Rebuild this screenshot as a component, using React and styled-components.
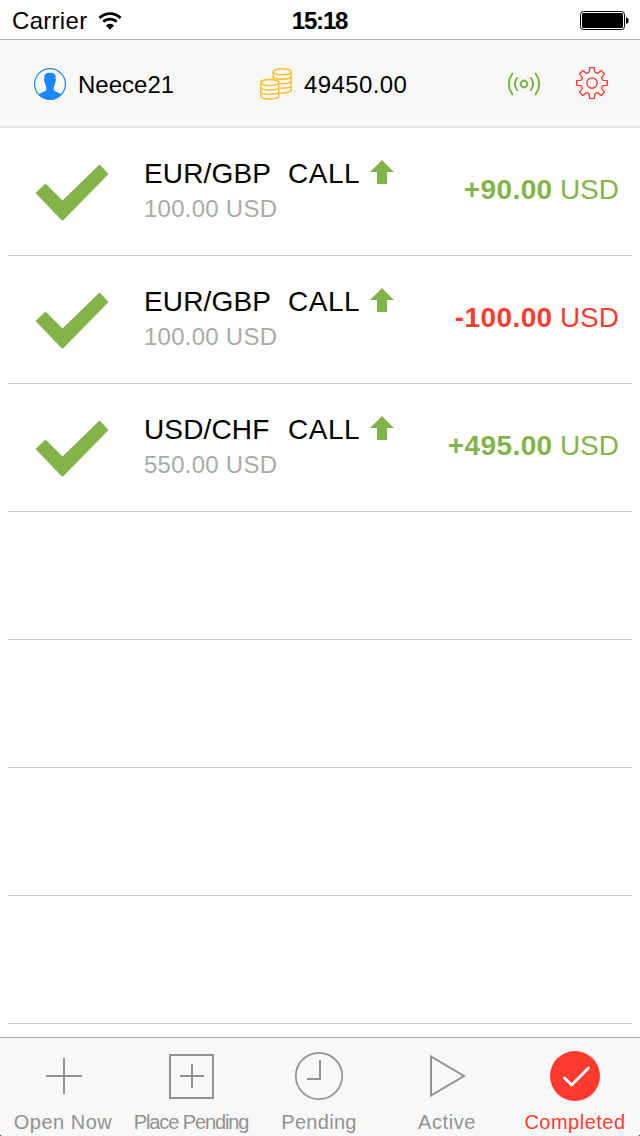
import React from 'react'
import styled, { createGlobalStyle } from 'styled-components'

const green = '#83b44a'
const red = '#ff3b30'
const grey = '#929292'

const trades = [
  { id: 1, pair: 'EUR/GBP', type: 'CALL', stake: '100.00 USD', result: '+90.00', currency: 'USD', color: green },
  { id: 2, pair: 'EUR/GBP', type: 'CALL', stake: '100.00 USD', result: '-100.00', currency: 'USD', color: red },
  { id: 3, pair: 'USD/CHF', type: 'CALL', stake: '550.00 USD', result: '+495.00', currency: 'USD', color: green },
]
const emptyRows = [4, 5, 6, 7]

const gearPoints = () => {
  const points = []
  const add = (radius, deg) => {
    const rad = (deg * Math.PI) / 180
    points.push(`${(16 + radius * Math.sin(rad)).toFixed(2)},${(16 - radius * Math.cos(rad)).toFixed(2)}`)
  }
  for (let i = 0; i < 8; i++) {
    const a = i * 45
    add(11, a - 17)
    add(12, a - 13)
    add(15.5, a - 9)
    add(15.5, a + 9)
    add(12, a + 13)
    add(11, a + 17)
  }
  return points.join(' ')
}

const WifiIcon = () => (
  <svg width='24' height='18' viewBox='0 0 26 20'>
    <path d='M1.3 6.6a16.6 16.6 0 0 1 23.4 0' fill='none' stroke='#000' strokeWidth='3.2' />
    <path d='M5.6 10.9a10.5 10.5 0 0 1 14.8 0' fill='none' stroke='#000' strokeWidth='3' />
    <path d='M13 19.6l-4.6-4.6a6.4 6.4 0 0 1 9.2 0z' />
  </svg>
)

const BatteryIcon = () => (
  <svg width='50' height='20' viewBox='0 0 50 20'>
    <rect x='0.5' y='0.5' width='44' height='18' rx='3' fill='none' stroke='#000' />
    <rect x='2' y='2' width='41' height='15' rx='1.5' />
    <path d='M46 6.2c3.6 0.6 3.6 6 0 6.6z' />
  </svg>
)

const UserIcon = () => (
  <svg width='32' height='32' viewBox='0 0 32 32'>
    <circle cx='16' cy='16' r='15.4' fill='none' stroke='#1c86fb' strokeWidth='1.2' />
    <path
      d='M16 4.8c4.2 0 6 1.6 5.6 5.6.6.3.4 3.2-.4 3.9-.3 2.2-.8 3.6-1.5 4.6v2.7c.4 2.400 5.2 2.7 7.8 5.100C24.6 30.2 20.5 31.7 16 31.7S7.4 30.2 4.5 26.7c2.600-2.400 7.400-2.700 7.800-5.100v-2.700c-.7-1-1.200-2.400-1.500-4.600-.8-.7-1-3.600-.4-3.900C10 6.400 11.800 4.800 16 4.800z'
      fill='#1c86fb'
    />
  </svg>
)

const CoinsIcon = () => (
  <svg width='32' height='32' viewBox='0 0 32 32' fill='none' stroke='#fdc02f' strokeWidth='1.5'>
    <ellipse cx='22.2' cy='3.8' rx='9' ry='3' />
    <path d='M13.2 3.8v8M31.2 3.8v18.200c0 1.800-4.500 3.300-11.700 2.900M31.200 8.300c0 3.900-18 3.900-18 0M31.200 12.800c0 2.200-5.500 3.200-11.900 2.600M31.200 17.400c0 2.200-5.500 3.200-11.700 2.700' />
    <ellipse cx='9.8' cy='14.6' rx='9' ry='3' />
    <path d='M.8 14.6v13.500c0 4 18 4 18 0V14.600M18.800 19.100c0 4-18 4-18 0M18.800 23.600c0 4-18 4-18 0' />
  </svg>
)

const SignalIcon = () => (
  <svg width='32' height='24' viewBox='0 0 32 24' fill='none' stroke={green} strokeWidth='2.1' strokeLinecap='round'>
    <circle cx='16' cy='12' r='3.3' strokeWidth='2.2' />
    <path d='M9 6a10.500 10.500 0 0 0 0 12M23 6a10.500 10.500 0 0 1 0 12M4.400 1.700a17 17 0 0 0 0 20.600M27.600 1.700a17 17 0 0 1 0 20.600' />
  </svg>
)

const GearIcon = () => (
  <svg width='32' height='32' viewBox='0 0 32 32' fill='none' stroke={red} strokeWidth='1.35'>
    <polygon points={gearPoints()} strokeLinejoin='round' />
    <circle cx='16' cy='16' r='5.2' />
  </svg>
)

const CheckIcon = () => (
  <svg width='72' height='56' viewBox='0 0 72 56'>
    <path d='M1.5 28L9.5 20.5L26.5 37.5L63.5 1.5L70.5 9L26.5 54Z' fill={green} stroke={green} strokeWidth='3' strokeLinejoin='round' />
  </svg>
)

const ArrowIcon = () => (
  <svg width='24' height='24' viewBox='0 0 24 24'>
    <path d='M12 0L24 12H17V24H7V12H0Z' fill={green} />
  </svg>
)

const tabs = [
  {
    label: 'Open Now',
    spacing: 0.5,
    icon: <path d='M25 7v36M7 25h36' />,
  },
  {
    label: 'Place Pending',
    spacing: -1.1,
    icon: <path d='M3 4h43v43H3zM25 13v24M13 25h24' />,
  },
  {
    label: 'Pending',
    spacing: 0.3,
    icon: (
      <>
        <circle cx='24' cy='25' r='23.2' strokeWidth='1.7' />
        <path d='M25 9v19H12' />
      </>
    ),
  },
  {
    label: 'Active',
    spacing: 0.55,
    icon: <path d='M8 5.5v39L41 25z' />,
  },
  {
    label: 'Completed',
    spacing: 0.5,
    active: true,
    icon: (
      <>
        <circle cx='24' cy='25' r='25' fill={red} stroke='none' />
        <path d='M13.5 27l7.2 7L37.5 17' stroke='#fff' strokeWidth='2.8' strokeLinecap='round' />
      </>
    ),
  },
]

const App = () => {
  return (
    <>
      <GlobalStyle />
      <Screen>
        <StatusBar>
          <Carrier>
            <span>Carrier</span>
            <WifiIcon />
          </Carrier>
          <Clock>15:18</Clock>
          <Battery>
            <BatteryIcon />
          </Battery>
        </StatusBar>
        <Header>
          <HeaderItem>
            <UserIcon />
            <HeaderText>Neece21</HeaderText>
          </HeaderItem>
          <HeaderItem>
            <CoinsIcon />
            <HeaderText $spacing={0.4}>49450.00</HeaderText>
          </HeaderItem>
          <SignalIcon />
          <GearButton>
            <GearIcon />
          </GearButton>
        </Header>
        <TradeList>
          {trades.map((trade) => (
            <Row key={trade.id}>
              <CheckIcon />
              <Details>
                <Title>
                  <Pair>{trade.pair}</Pair>
                  <Direction>{trade.type}</Direction>
                  <ArrowIcon />
                </Title>
                <Stake>{trade.stake}</Stake>
              </Details>
              <Result $color={trade.color}>
                <strong>{trade.result}</strong> {trade.currency}
              </Result>
            </Row>
          ))}
          {emptyRows.map((row) => (
            <Row key={row} />
          ))}
        </TradeList>
        <TabBar>
          {tabs.map((tab) => (
            <Tab key={tab.label} $active={tab.active}>
              <svg width='48' height='50' viewBox='0 0 48 50' fill='none' stroke='currentColor' strokeWidth='2' overflow='visible'>
                {tab.icon}
              </svg>
              <TabLabel $spacing={tab.spacing}>{tab.label}</TabLabel>
            </Tab>
          ))}
        </TabBar>
      </Screen>
    </>
  )
}

const GlobalStyle = createGlobalStyle`
  * {
    box-sizing: border-box;
  }

  html {
    background: #333;
  }

  body {
    margin: 0;
    font-family: 'Liberation Sans', Arial, sans-serif;
  }

  svg {
    display: block;
    flex-shrink: 0;
  }
`

const Screen = styled.div`
  display: flex;
  flex-direction: column;
  width: 640px;
  height: 1136px;
  overflow: hidden;
  background: #fff;
  border-radius: 0 0 3px 3px;
`

const StatusBar = styled.div`
  display: grid;
  grid-template-columns: 1fr auto 1fr;
  align-items: center;
  height: 40px;
  flex-shrink: 0;
  padding: 2px 10px 0 12px;
  border-bottom: 1px solid #b2b2b2;
  font-size: 24px;
  line-height: 28px;
`

const Carrier = styled.div`
  display: flex;
  align-items: center;
  gap: 11px;
  letter-spacing: 0.3px;
`

const Clock = styled.div`
  margin-left: -3px;
  font-weight: 700;
  letter-spacing: -1.2px;
`

const Battery = styled.div`
  display: flex;
  justify-content: flex-end;
`

const Header = styled.header`
  display: grid;
  grid-template-columns: 226px 248px 68px 1fr;
  align-items: center;
  height: 88px;
  flex-shrink: 0;
  padding: 2px 0 0 34px;
  background: #f8f8f8;
  border-bottom: 2px solid #e4e4e4;
`

const HeaderItem = styled.div`
  display: flex;
  align-items: center;
  gap: 12px;
`

const HeaderText = styled.span`
  font-size: 24px;
  line-height: 28px;
  padding-top: 2px;
  letter-spacing: ${(props) => props.$spacing || 0}px;
`

const GearButton = styled.div`
  padding-bottom: 2px;
`

const TradeList = styled.div`
  flex: 1;
  min-height: 0;
  padding: 0 8px;
`

const Row = styled.div`
  display: flex;
  align-items: center;
  height: 128px;
  padding: 2px 13px 0 28px;
  border-bottom: 1px solid #c8c8c8;
`

const Details = styled.div`
  margin-left: 36px;
  padding-bottom: 4px;
`

const Title = styled.div`
  display: flex;
  align-items: center;
  font-size: 28px;
  line-height: 36px;

  svg {
    margin: 0 0 3px 10px;
  }
`

const Pair = styled.span`
  width: 144px;
  letter-spacing: 0.15px;
`

const Direction = styled.span`
  width: 72px;
  letter-spacing: 0.5px;
`

const Stake = styled.div`
  color: #aaa;
  font-size: 24px;
  line-height: 34px;
  letter-spacing: 0.25px;
`

const Result = styled.div`
  margin-left: auto;
  padding-bottom: 6px;
  color: ${(props) => props.$color};
  font-size: 28px;
  line-height: 34px;
  white-space: nowrap;

  strong {
    letter-spacing: 0.4px;
    margin-right: -0.5px;
  }
`

const TabBar = styled.nav`
  display: grid;
  grid-template-columns: repeat(5, 1fr);
  height: 99px;
  flex-shrink: 0;
  background: #f8f8f8;
  border-top: 1px solid #acacac;
`

const Tab = styled.div`
  display: flex;
  flex-direction: column;
  align-items: center;
  padding: 13px 2px 0 0;
  color: ${(props) => (props.$active ? red : grey)};
`

const TabLabel = styled.span`
  margin-top: 9px;
  font-size: 20px;
  line-height: 24px;
  white-space: nowrap;
  letter-spacing: ${(props) => props.$spacing}px;
`

export default App
